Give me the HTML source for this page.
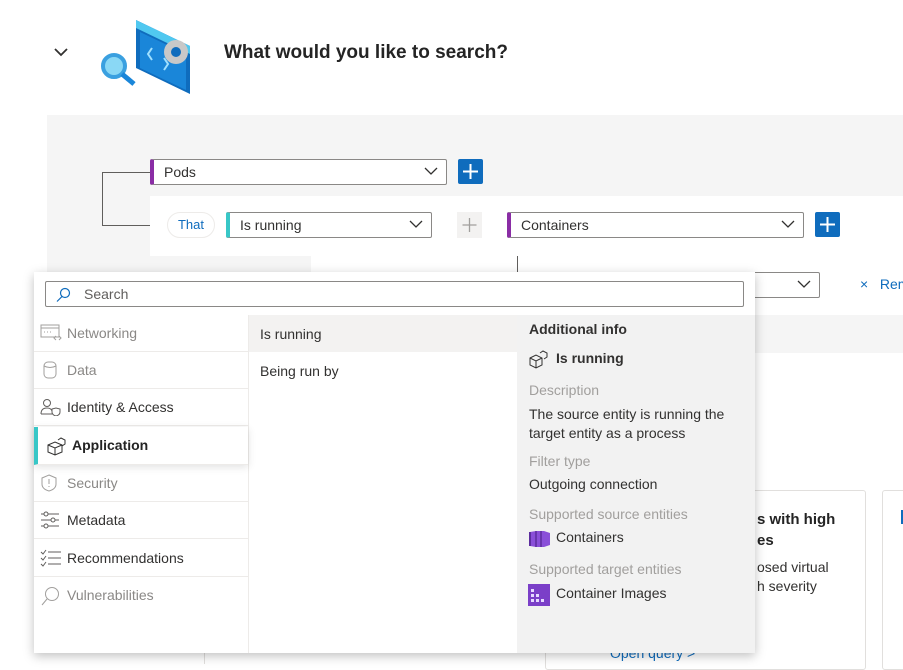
<!DOCTYPE html>
<html><head><meta charset="utf-8"><style>
*{box-sizing:border-box;margin:0;padding:0}
body{width:903px;height:664px;overflow:hidden;background:#fff;font-family:"Segoe UI","Liberation Sans",sans-serif;color:#323130;position:relative}
.a{position:absolute}
.dd{position:absolute;background:#fff;border:1px solid #8a8886;height:26px;font-size:14px;padding:4px 10px;border-radius:2px}
.dd .chev{position:absolute;right:8px;top:6px}
.plus{position:absolute;width:25px;height:25px;background:#0f6cbd;border-radius:2px}
.cat{position:absolute;left:34px;width:214px;height:37px;border-bottom:1px solid #edebe9;font-size:14px;color:#8a8886;padding-left:33px;line-height:36px}
.cat svg{position:absolute;left:6px;top:9px}
.lbl{position:absolute;left:529px;font-size:14px;color:#a19f9d}
.val{position:absolute;font-size:14px;color:#323130}
</style></head><body>
<svg class="a" style="left:53px;top:46px" width="16" height="12"><path d="M2 3l6 6 6-6" stroke="#323130" stroke-width="1.8" fill="none"/></svg>
<svg class="a" style="left:94px;top:14px" width="110" height="82">
<polygon points="42,6 96,32 96,80 42,54" fill="#0f6cbd"/>
<polygon points="42,6 96,32 96,40 42,14" fill="#50c8f0"/>
<polygon points="46,18 92,40 92,76 46,54" fill="#1a86d9"/>
<circle cx="82" cy="38" r="12" fill="#c8c8c8"/><circle cx="82" cy="38" r="5" fill="#0f6cbd"/>
<path d="M58 34l-4 6 4 6M70 44l4 6-4 6" stroke="#9fe0ff" stroke-width="2" fill="none"/>
<circle cx="20" cy="52" r="11" fill="#8ad8f5" stroke="#3aa0e0" stroke-width="4"/>
<path d="M28 60l12 10" stroke="#1a86d9" stroke-width="5"/>
</svg>
<div class="a" style="left:224px;top:42px;font-size:19px;font-weight:bold;color:#242424">What would you like to search?</div>
<div class="a" style="left:47px;top:115px;width:856px;height:549px;background:#f5f5f5"></div>
<div class="a" style="left:150px;top:196px;width:753px;height:60px;background:#fff"></div>
<div class="a" style="left:311px;top:256px;width:592px;height:59px;background:#fff"></div>
<div class="a" style="left:755px;top:315px;width:148px;height:38px;background:#f5f5f5"></div>
<div class="a" style="left:47px;top:353px;width:856px;height:311px;background:#fff"></div>
<div class="a" style="left:102px;top:172px;width:48px;height:54px;border:1px solid #605e5c;border-right:none"></div>
<div class="a" style="left:517px;top:256px;width:1px;height:20px;background:#605e5c"></div>
<div class="dd" style="left:150px;top:159px;width:297px;border-left:4px solid #8a2da5">Pods<svg class="chev" width="14" height="10"><path d="M1 2l6 6 6-6" stroke="#323130" fill="none" stroke-width="1.3"/></svg></div>
<div class="plus" style="left:458px;top:159px"><svg width="25" height="25"><path d="M12.5 5v15M5 12.5h15" stroke="#fff" stroke-width="2"/></svg></div>
<div class="a" style="left:167px;top:212px;width:48px;height:26px;border-radius:13px;background:#fff;border:1px solid #edebe9;color:#0f6cbd;font-size:13px;text-align:center;line-height:24px">That</div>
<div class="dd" style="left:226px;top:212px;width:206px;border-left:4px solid #38c7c7">Is running<svg class="chev" width="14" height="10"><path d="M1 2l6 6 6-6" stroke="#323130" fill="none" stroke-width="1.3"/></svg></div>
<div class="a" style="left:457px;top:212px;width:25px;height:26px;background:#f3f2f1"><svg width="25" height="26"><path d="M12.5 6v14M5.5 13h14" stroke="#a19f9d" stroke-width="1.3"/></svg></div>
<div class="dd" style="left:507px;top:212px;width:297px;border-left:4px solid #8a2da5">Containers<svg class="chev" width="14" height="10"><path d="M1 2l6 6 6-6" stroke="#323130" fill="none" stroke-width="1.3"/></svg></div>
<div class="plus" style="left:815px;top:212px"><svg width="25" height="25"><path d="M12.5 5v15M5 12.5h15" stroke="#fff" stroke-width="2"/></svg></div>
<div class="dd" style="left:700px;top:272px;width:120px"><svg class="chev" width="14" height="10"><path d="M1 2l6 6 6-6" stroke="#323130" fill="none" stroke-width="1.3"/></svg></div>
<div class="a" style="left:860px;top:276px;font-size:14px;color:#0f6cbd;white-space:nowrap">×&nbsp;&nbsp; Rem</div>
<div class="a" style="left:545px;top:490px;width:321px;height:180px;background:#fff;border:1px solid #e1dfdd;border-radius:3px"></div>
<div class="a" style="left:882px;top:490px;width:40px;height:180px;background:#fff;border:1px solid #e1dfdd;border-radius:3px"></div>
<div class="a" style="left:901px;top:510px;width:2px;height:14px;background:#0f6cbd"></div>
<div class="a" style="left:757px;top:509px;font-size:15px;font-weight:600;color:#242424;line-height:21px">s with high<br>es</div>
<div class="a" style="left:757px;top:558px;font-size:14px;color:#323130;line-height:19px">osed virtual<br>h severity</div>
<div class="a" style="left:610px;top:645px;font-size:14px;color:#0f6cbd">Open query &gt;</div>
<div class="a" style="left:204px;top:650px;width:1px;height:14px;background:#e1dfdd"></div>
<div class="a" style="left:34px;top:272px;width:721px;height:381px;background:#fff;box-shadow:0 3px 10px rgba(0,0,0,.25)"></div>
<div class="a" style="left:45px;top:281px;width:699px;height:26px;border:1px solid #8a8886;border-radius:2px;background:#fff;font-size:14px;color:#605e5c;padding:4px 0 0 38px">Search
<svg class="a" style="left:9px;top:5px" width="16" height="16"><circle cx="10" cy="6" r="4.5" stroke="#0f6cbd" fill="none" stroke-width="1.2"/><path d="M7 9.5l-5 5" stroke="#0f6cbd" stroke-width="1.2"/></svg></div>
<div class="a" style="left:248px;top:315px;width:1px;height:338px;background:#edebe9"></div>
<div class="a" style="left:517px;top:315px;width:238px;height:338px;background:#f2f2f2"></div>
<div class="cat" style="top:315px"><svg width="24" height="18"><rect x="1" y="1" width="18" height="12" fill="none" stroke="#a19f9d"/><path d="M1 4h18M4 8h1M7 8h1M10 8h1M16 12l-2 2 2 2M19 12l2 2-2 2" stroke="#a19f9d" fill="none"/></svg>Networking</div>
<div class="cat" style="top:352px"><svg width="20" height="18"><rect x="4" y="1" width="12" height="16" rx="4" fill="none" stroke="#a19f9d"/><path d="M4 5q6 3 12 0" stroke="#a19f9d" fill="none"/></svg>Data</div>
<div class="cat" style="top:389px;color:#323130"><svg width="22" height="18"><circle cx="7" cy="5" r="3.5" fill="none" stroke="#605e5c"/><path d="M1 16q0-6 6-6 4 0 5 3M1 16h11" stroke="#605e5c" fill="none"/><path d="M12 11l4-1 4 1v3q0 3-4 4-4-1-4-4z" fill="none" stroke="#605e5c"/></svg>Identity &amp; Access</div>
<div class="cat" style="top:427px;height:38px;color:#242424;font-weight:bold;padding-left:34px;box-shadow:0 2px 8px rgba(0,0,0,.12);background:#fff;border-left:4px solid #38c7c7"><svg width="22" height="20" style="left:8px"><path d="M2 9l7-3 7 3v7l-7 3-7-3zM2 9l7 3 7-3M9 12v7" fill="none" stroke="#323130"/><path d="M12 4l3-2 4 2v4l-3 2" fill="none" stroke="#323130"/></svg>Application</div>
<div class="cat" style="top:465px"><svg width="20" height="18"><path d="M9 1l7 3v6q0 5-7 7-7-2-7-7V4z" fill="none" stroke="#a19f9d"/><path d="M9 5v5M9 12v1" stroke="#a19f9d"/></svg>Security</div>
<div class="cat" style="top:502px;color:#323130"><svg width="20" height="18"><path d="M1 3h18M1 9h18M1 15h18" stroke="#605e5c"/><circle cx="6" cy="3" r="2" fill="#fff" stroke="#605e5c"/><circle cx="13" cy="9" r="2" fill="#fff" stroke="#605e5c"/><circle cx="6" cy="15" r="2" fill="#fff" stroke="#605e5c"/></svg>Metadata</div>
<div class="cat" style="top:540px;color:#323130"><svg width="22" height="18"><path d="M1 3l2 2 3-4M1 9l2 2 3-4M1 15l2 2 3-4M8 3h13M8 9h13M8 15h13" stroke="#605e5c" fill="none"/></svg>Recommendations</div>
<div class="cat" style="top:577px;border-bottom:none"><svg width="22" height="20"><circle cx="12" cy="8" r="6.5" fill="none" stroke="#a19f9d"/><path d="M7 13l-5 6" stroke="#a19f9d"/></svg>Vulnerabilities</div>
<div class="a" style="left:249px;top:315px;width:268px;height:37px;background:#f3f2f1;font-size:14px;padding:11px 0 0 11px">Is running</div>
<div class="a" style="left:260px;top:363px;font-size:14px">Being run by</div>
<div class="a" style="left:529px;top:321px;font-size:14px;font-weight:bold;color:#323130">Additional info</div>
<svg class="a" style="left:529px;top:350px" width="20" height="20"><path d="M1 8l6-3 6 3v7l-6 3-6-3zM1 8l6 3 6-3M7 11v7" fill="none" stroke="#323130"/><path d="M11 3l3-2 4 2v4l-3 2" fill="none" stroke="#323130"/></svg>
<div class="a" style="left:556px;top:350px;font-size:14px;font-weight:600">Is running</div>
<div class="lbl" style="top:382px">Description</div>
<div class="val" style="left:529px;top:405px;line-height:19px">The source entity is running the<br>target entity as a process</div>
<div class="lbl" style="top:453px">Filter type</div>
<div class="val" style="left:529px;top:476px">Outgoing connection</div>
<div class="lbl" style="top:506px">Supported source entities</div>
<svg class="a" style="left:529px;top:530px" width="22" height="18"><path d="M1 2l6-1h8l6 2v12l-6 2H7l-6-1z" fill="#8a4fd8"/><path d="M7 1v16M12 1v16" stroke="#5c2d9e" stroke-width="1.5"/><path d="M1 2v14" stroke="#5c2d9e" stroke-width="2"/></svg>
<div class="val" style="left:556px;top:529px">Containers</div>
<div class="lbl" style="top:561px">Supported target entities</div>
<svg class="a" style="left:528px;top:584px" width="22" height="22"><rect width="22" height="22" fill="#7b3fc8"/><g fill="#e6d9ff"><rect x="3" y="5" width="3" height="3"/><rect x="3" y="10" width="3" height="3"/><rect x="3" y="15" width="3" height="3"/><rect x="8" y="10" width="3" height="3"/><rect x="8" y="15" width="3" height="3"/><rect x="13" y="15" width="3" height="3"/></g></svg>
<div class="val" style="left:556px;top:585px">Container Images</div>
</body></html>
